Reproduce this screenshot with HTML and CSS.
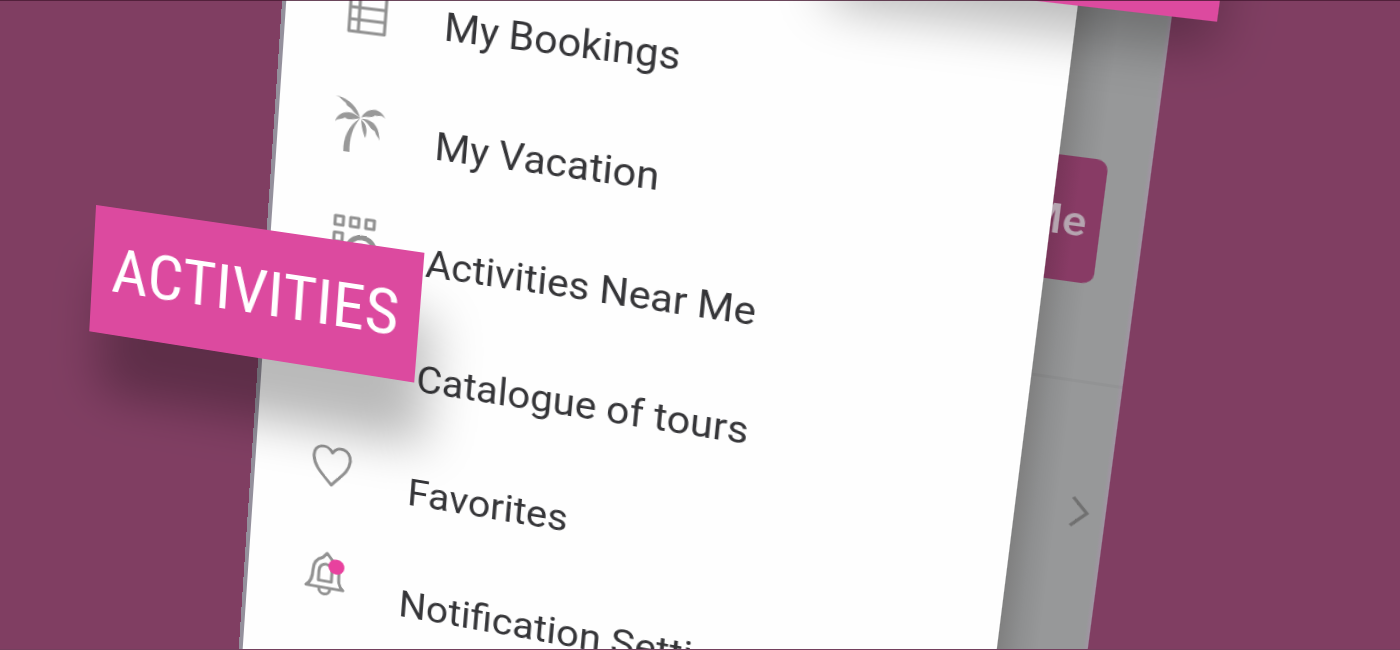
FILE: index.html
```
<!DOCTYPE html>
<html lang="en">
<head>
<meta charset="utf-8">
<title>Activities</title>
<link rel="stylesheet" href="styles.css">
</head>
<body>
<main class="stage">
  <div class="scene">
    <div class="device">
      <nav class="sheet">
        <ul class="menu">
          <li><a class="item" href="#bookings">
            <svg class="icon" viewBox="0 0 48 56"><path d="M8 3h34v53H8zM8 19h34M8 32h34M8 44h34M17 3v53"/></svg>
            <span>My Bookings</span></a></li>
          <li><a class="item" href="#vacation">
            <svg class="icon solid" viewBox="0 0 48 56"><path d="M25 23C22 13 14 4 0 3c7 2 4 3 10 6 1 4 6 4 8 8 2 2 5 3 7 6zM26 22c4-10 16-14 23-2-5-4-5-1-10-2-4 4-9 1-13 4zM25 23C17 15 4 17 1 29c3-4 6-2 9-5 5 3 8 0 15-1zM26 23c13-1 18 7 19 20-2-5-4-5-5-9-6-2-5-7-14-11zM26 24c6 4 7 11 5 18-2-5-4-9-5-18zM25 23C18 33 16 45 17 58h-6C10 45 14 31 25 23z"/></svg>
            <span>My Vacation</span></a></li>
          <li><a class="item" href="#near">
            <svg class="icon" viewBox="0 0 48 56"><path d="M8 5h8v9H8zM23 5h8v9h-8zM38 5h8v9h-8zM8 22h8v9H8zM8 39h8v9H8z"/><path class="thick" d="M22 37a13 13 0 0 1 26 0c0 6-7 12-13 17-6-5-13-11-13-17z"/><circle cx="35" cy="37" r="5"/></svg>
            <span>Activities Near Me</span></a></li>
          <li><a class="item" href="#tours">
            <svg class="icon" viewBox="0 0 48 56"><path d="M6 6h36v28H6zM14 15h20M14 24h20"/></svg>
            <span>Catalogue of tours</span></a></li>
          <li><a class="item" href="#favorites">
            <svg class="icon" viewBox="0 0 48 56"><path d="M23 47C14 37 5 30 4 19 3 5 17 4 22 13 26 4 40 6 40 19 39 32 30 37 23 47z"/></svg>
            <span>Favorites</span></a></li>
          <li><a class="item" href="#notifications">
            <svg class="icon" viewBox="0 0 48 56"><path d="M5 38c5-4 6-9 6-17 0-9 4-13 9-15l4-5 5 6c6 3 8 7 8 14 0 8 0 13 5 17zM17 31V21c0-11 13-11 13 0v10zM18 39c0 8 11 8 11 0"/><circle class="dot" cx="34" cy="14" r="8"/></svg>
            <span>Notification Settings</span></a></li>
        </ul>
      </nav>
      <div class="backdrop">
        <button class="near-button" type="button">Near Me</button>
        <hr class="divider">
        <svg class="chevron" viewBox="0 0 20 34"><path d="M3 3l13 14L3 31"/></svg>
      </div>
    </div>
    <div class="tag tag-activities">ACTIVITIES</div>
    <div class="tag tag-top"></div>
  </div>
</main>
</body>
</html>
```
FILE: styles.css
```
* { box-sizing: border-box; }

body {
  margin: 0;
  background: #803e62;
  font-family: Roboto, "Open Sans", sans-serif;
}

.stage {
  position: relative;
  height: 100vh;
  overflow: hidden;
}

.stage::after {
  content: "";
  position: absolute;
  inset: 0;
  border-top: 1px solid rgba(70, 25, 50, 0.8);
  border-bottom: 1px solid #74405e;
  pointer-events: none;
}

/* One tilted plane in perspective holds the phone and its labels. */
.scene {
  position: absolute;
  top: 0;
  left: 0;
  transform-origin: 0 0;
  transform: matrix3d(0.99889, 0.12679, 0, -0.00009768, -0.04593, 0.99782, 0, 0.00007383, 0, 0, 1, 0, 294.78, -282.35, 0, 0.97785);
}

.device {
  display: grid;
  grid-template-columns: 710px 78px;
  height: 1120px;
}

.sheet {
  background: #fefefe;
  border-left: 4px solid #94909c;
}

.menu {
  margin: 0;
  padding: 230px 0 0;
  list-style: none;
}

.item {
  display: flex;
  align-items: center;
  gap: 50px;
  height: 119px;
  padding-left: 54px;
  color: #353538;
  font-size: 38px;
  line-height: 48px;
  text-decoration: none;
  white-space: nowrap;
}

.icon {
  flex: none;
  width: 48px;
  height: 56px;
  margin-bottom: 26px;
  overflow: visible;
  fill: none;
  stroke: #929292;
  stroke-width: 3;
  stroke-linejoin: round;
}

.icon.solid { fill: #999; stroke: none; }
.icon .thick { stroke-width: 5; }
.icon .dot { fill: #e8419e; stroke: none; }

.backdrop {
  display: flex;
  flex-direction: column;
  align-items: flex-start;
  padding-top: 337px;
  overflow: hidden;
  background: linear-gradient(90deg, #808080, #8e8f90 18px, #979899 36px, #979899 74px, #a294a4);
}

.near-button {
  display: flex;
  justify-content: flex-end;
  align-items: center;
  width: 42px;
  height: 118px;
  padding: 4px 12px 0 0;
  overflow: hidden;
  border: 0;
  border-radius: 0 10px 10px 0;
  background: linear-gradient(90deg, #783559, #883b65 20px);
  color: #b5a5b0;
  font: 500 38px/40px Roboto, sans-serif;
  white-space: nowrap;
}

.divider {
  width: 100%;
  height: 3px;
  margin: 92px 0 0;
  border: 0;
  background: rgba(0, 0, 0, 0.03);
}

.chevron {
  width: 20px;
  height: 34px;
  margin: 108px 0 0 46px;
  fill: none;
  stroke: #707070;
  stroke-width: 3;
}

/* Labels floating over the phone. */
.tag {
  position: absolute;
  display: flex;
  justify-content: center;
  align-items: center;
  width: 326px;
  height: 134px;
  background: #dc4a9f;
  box-shadow: 12px 64px 50px rgba(0, 0, 0, 0.27);
  color: #fff;
  font: 64px/88px "Roboto Condensed", "Liberation Sans Narrow", sans-serif;
}

.tag-activities { top: 517px; left: -172px; }

.tag-top {
  top: 64px;
  left: 499px;
  box-shadow: 0 28px 46px rgba(0, 0, 0, 0.26);
}
```
